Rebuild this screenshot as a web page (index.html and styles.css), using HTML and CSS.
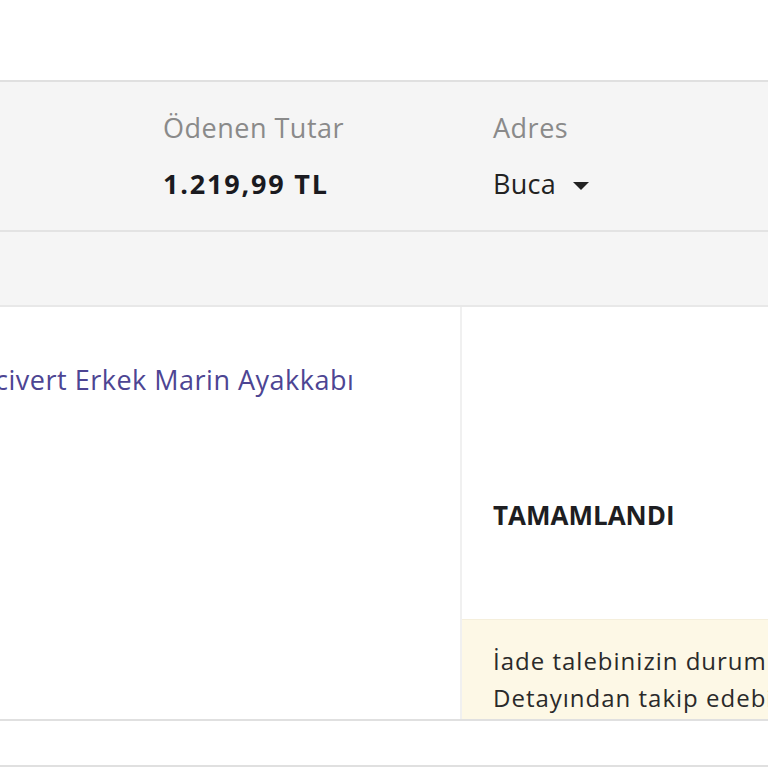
FILE: index.html
```html
<!DOCTYPE html>
<html lang="tr">
<head>
<meta charset="utf-8">
<link rel="stylesheet" href="styles.css">
</head>
<body>
<div class="page">
  <div class="top"></div>
  <div class="summary">
    <div class="col">
      <div class="label">Ödenen Tutar</div>
      <div class="value">1.219,99 TL</div>
    </div>
    <div class="col">
      <div class="label">Adres</div>
      <div class="addr">Buca <span class="caret"></span></div>
    </div>
  </div>
  <div class="band"></div>
  <div class="items">
    <div class="product">
      <a class="link" href="#">Lacivert Erkek Marin Ayakkabı</a>
    </div>
    <div class="status">
      <div class="state">TAMAMLANDI</div>
      <div class="note">İade talebinizin durumunu Sipariş<br>Detayından takip edebilirsiniz.</div>
    </div>
  </div>
  <div class="footer"></div>
</div>
</body>
</html>
```
FILE: styles.css
```css
html, body {
  margin: 0;
  padding: 0;
  background: #fff;
  overflow: hidden;
}
.page {
  width: 768px;
  height: 768px;
  overflow: hidden;
  font-family: "Open Sans", "Noto Sans", sans-serif;
  color: #222;
}
.top {
  height: 80px;
}
.summary {
  display: flex;
  height: 148px;
  background: #f5f5f5;
  border-top: 2px solid #e0e0e0;
  border-bottom: 2px solid #e3e3e3;
  padding-left: 163px;
  overflow: hidden;
}
.col {
  flex: 0 0 330px;
  padding-top: 28px;
}
.label {
  font-size: 27px;
  letter-spacing: 0.5px;
  color: #8a8a8a;
  line-height: 36px;
}
.value {
  font-size: 27px;
  font-weight: 700;
  letter-spacing: 1.8px;
  color: #1a1a20;
  line-height: 36px;
  margin-top: 20px;
}
.addr {
  font-size: 27px;
  letter-spacing: 0.3px;
  line-height: 36px;
  margin-top: 20px;
  color: #222;
  display: flex;
  align-items: center;
}
.caret {
  display: inline-block;
  width: 0;
  height: 0;
  border-left: 8px solid transparent;
  border-right: 8px solid transparent;
  border-top: 8px solid #222;
  margin-left: 17px;
  margin-top: 3px;
}
.band {
  height: 73px;
  background: #f5f5f5;
  border-bottom: 2px solid #e8e8e8;
}
.items {
  display: flex;
  height: 412px;
  border-bottom: 2px solid #e0e0e0;
}
.product {
  flex: 0 0 462px;
  border-right: 2px solid #f0f0f0;
  overflow: hidden;
  padding-top: 55px;
  box-sizing: border-box;
}
.link {
  display: block;
  white-space: nowrap;
  margin-left: -35px;
  font-size: 27px;
  letter-spacing: 0.5px;
  line-height: 36px;
  color: #4d4593;
  text-decoration: none;
}
.status {
  flex: 1;
  display: flex;
  flex-direction: column;
  overflow: hidden;
}
.state {
  flex: 1;
  padding-left: 31px;
  padding-top: 190px;
  box-sizing: border-box;
  font-size: 26px;
  line-height: 36px;
  font-weight: 700;
  color: #1e1e22;
}
.note {
  height: 100px;
  box-sizing: border-box;
  background: #fdf8e6;
  border-top: 1px solid #f5efdc;
  padding: 22px 0 0 31px;
  font-size: 24px;
  letter-spacing: 1px;
  line-height: 37px;
  color: #2a2a2a;
  white-space: nowrap;
  overflow: hidden;
}
.footer {
  height: 44px;
  border-bottom: 2px solid #e0e0e0;
}
```
